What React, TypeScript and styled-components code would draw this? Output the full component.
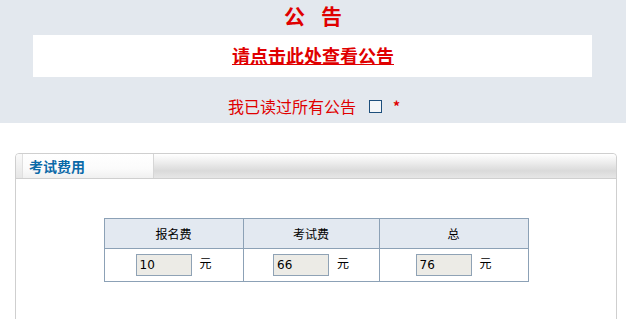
import React from "react";
import styled, { createGlobalStyle } from "styled-components";

const Global = createGlobalStyle`
  html, body {
    margin: 0;
    padding: 0;
    background: #ffffff;
    font-family: "Noto Sans CJK SC", "DejaVu Sans", sans-serif;
  }
`;

const Notice = styled.div`
  background: #e3e8ee;
  height: 123px;
  box-sizing: border-box;
  padding-top: 2px;
  display: flex;
  flex-direction: column;
  align-items: center;
`;

const NoticeTitle = styled.div`
  color: #e00000;
  font-size: 21px;
  font-weight: bold;
  line-height: 26px;
  letter-spacing: 16px;
  padding-left: 16px;
`;

const LinkBox = styled.div`
  margin-top: 7px;
  align-self: stretch;
  margin-left: 33px;
  margin-right: 34px;
  height: 42px;
  background: #ffffff;
  display: flex;
  align-items: center;
  justify-content: center;
`;

const NoticeLink = styled.a`
  color: #e00000;
  font-size: 18px;
  font-weight: bold;
  text-decoration: underline;
  cursor: pointer;
  margin-left: 1px;
  margin-top: -2px;
`;

const AgreeRow = styled.div`
  margin-top: 18px;
  display: flex;
  align-items: center;
  color: #e00000;
  font-size: 16px;
  line-height: 22px;
  padding-left: 2px;
`;

const Box = styled.span`
  display: inline-block;
  width: 11px;
  height: 11px;
  border: 1px solid #1d4f7c;
  background: #f4f6f8;
  margin-left: 13px;
  margin-right: 11px;
`;

const Star = styled.span`
  color: #e00000;
  font-size: 14px;
  font-weight: bold;
`;

const Panel = styled.div`
  margin: 30px 9px 0 15px;
  border: 1px solid #cfcfcf;
  border-radius: 4px 4px 0 0;
  height: 200px;
`;

const PanelHead = styled.div`
  height: 24px;
  display: flex;
  border-bottom: 1px solid #cfcfcf;
  border-radius: 4px 4px 0 0;
  overflow: hidden;
  background: linear-gradient(#ffffff 0%, #f0f0f0 30%, #dadada 70%, #e6e6e6 100%);
`;

const Grip = styled.div`
  width: 6px;
  border-right: 1px solid #e0e0e0;
  background: linear-gradient(#fafafa, #e6e6e6);
`;

const Tab = styled.div`
  box-sizing: border-box;
  width: 131px;
  border-right: 1px solid #d6d6d6;
  background: linear-gradient(#ffffff 0%, #fbfbfb 60%, #f0f0f0 100%);
  color: #0b6aa8;
  font-weight: bold;
  font-size: 14px;
  line-height: 24px;
  padding-left: 6px;
`;

const PanelBody = styled.div`
  padding-top: 39px;
  display: flex;
  justify-content: center;
`;

const FeeTable = styled.table`
  border-collapse: collapse;
  width: 425px;
  font-size: 12px;
  color: #000;
`;

const HeadCell = styled.th<{ w: number }>`
  width: ${(p) => p.w}px;
  height: 29px;
  background: #e3e9f1;
  border: 1px solid #8ca1b6;
  font-weight: normal;
  padding: 0;
`;

const Cell = styled.td`
  height: 32px;
  border: 1px solid #8ca1b6;
  text-align: center;
  padding: 0;
`;

const Amount = styled.input`
  width: 48px;
  height: 20px;
  box-sizing: content-box;
  border: 1px solid #8fa2b5;
  background: #ecebe6;
  font-family: "DejaVu Sans", sans-serif;
  font-size: 12px;
  padding: 0 3px;
  margin: 0 8px 0 0;
  vertical-align: middle;
  color: #000;
`;

const fees = [
  { label: "报名费", value: "10", w: 139 },
  { label: "考试费", value: "66", w: 136 },
  { label: "总", value: "76", w: 149 },
];

export default function App() {
  return (
    <>
      <Global />
      <Notice>
        <NoticeTitle>公告</NoticeTitle>
        <LinkBox>
          <NoticeLink>请点击此处查看公告</NoticeLink>
        </LinkBox>
        <AgreeRow>
          我已读过所有公告
          <Box />
          <Star>*</Star>
        </AgreeRow>
      </Notice>
      <Panel>
        <PanelHead>
          <Grip />
          <Tab>考试费用</Tab>
        </PanelHead>
        <PanelBody>
          <FeeTable>
            <thead>
              <tr>
                {fees.map((f) => (
                  <HeadCell key={f.label} w={f.w}>
                    {f.label}
                  </HeadCell>
                ))}
              </tr>
            </thead>
            <tbody>
              <tr>
                {fees.map((f) => (
                  <Cell key={f.label}>
                    <Amount defaultValue={f.value} readOnly />元
                  </Cell>
                ))}
              </tr>
            </tbody>
          </FeeTable>
        </PanelBody>
      </Panel>
    </>
  );
}
